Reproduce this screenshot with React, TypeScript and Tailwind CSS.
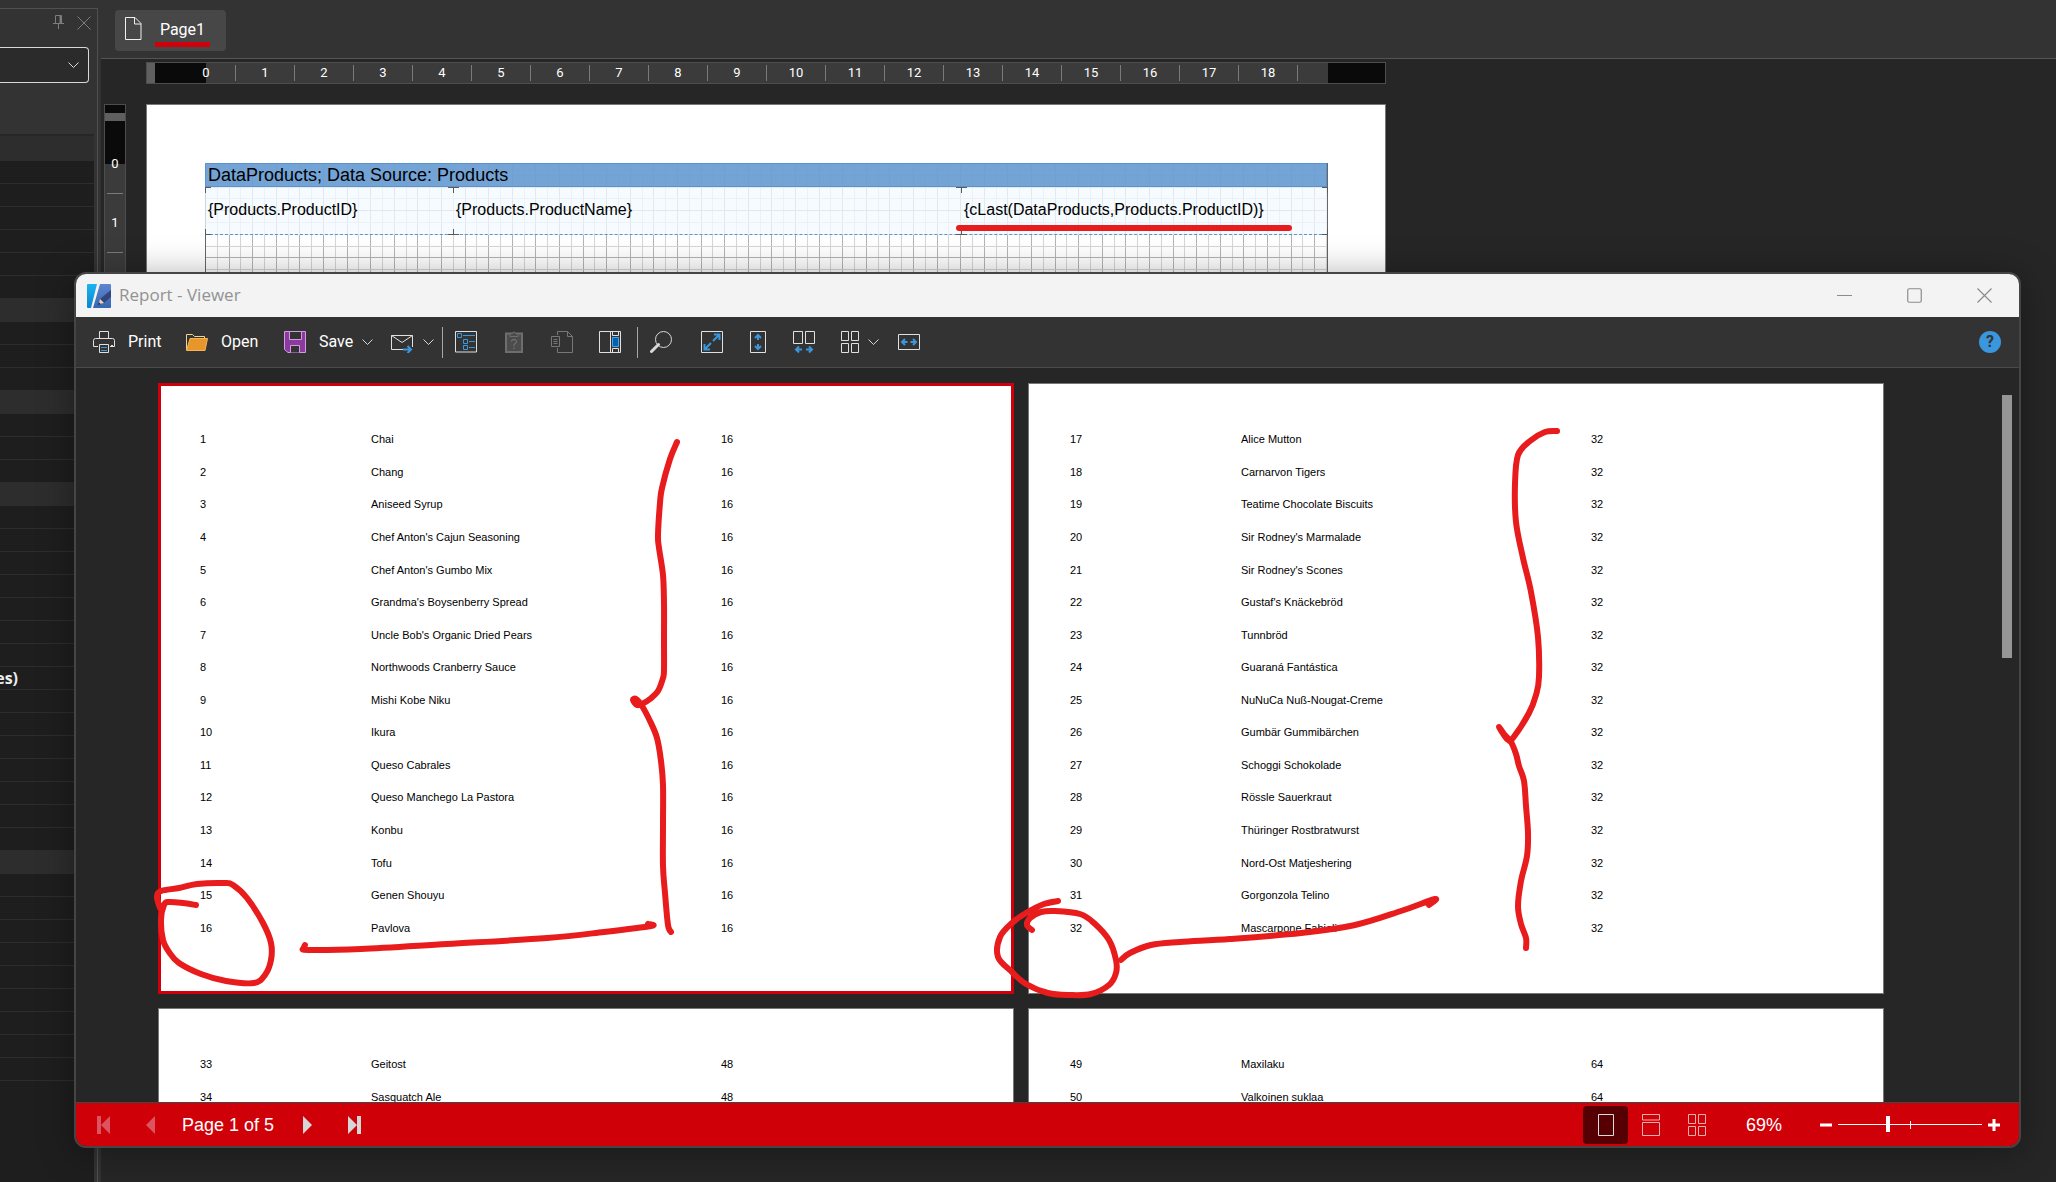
import type { ReactNode } from "react";

type Product = [id: number, name: string, last: number];

const toRows = (first: number, last: number, names: string[]): Product[] =>
  names.map((name, i) => [first + i, name, last]);

const PAGES: Product[][] = [
  toRows(1, 16, [
    "Chai",
    "Chang",
    "Aniseed Syrup",
    "Chef Anton's Cajun Seasoning",
    "Chef Anton's Gumbo Mix",
    "Grandma's Boysenberry Spread",
    "Uncle Bob's Organic Dried Pears",
    "Northwoods Cranberry Sauce",
    "Mishi Kobe Niku",
    "Ikura",
    "Queso Cabrales",
    "Queso Manchego La Pastora",
    "Konbu",
    "Tofu",
    "Genen Shouyu",
    "Pavlova",
  ]),
  toRows(17, 32, [
    "Alice Mutton",
    "Carnarvon Tigers",
    "Teatime Chocolate Biscuits",
    "Sir Rodney's Marmalade",
    "Sir Rodney's Scones",
    "Gustaf's Knäckebröd",
    "Tunnbröd",
    "Guaraná Fantástica",
    "NuNuCa Nuß-Nougat-Creme",
    "Gumbär Gummibärchen",
    "Schoggi Schokolade",
    "Rössle Sauerkraut",
    "Thüringer Rostbratwurst",
    "Nord-Ost Matjeshering",
    "Gorgonzola Telino",
    "Mascarpone Fabioli",
  ]),
  toRows(33, 48, ["Geitost", "Sasquatch Ale"]),
  toRows(49, 64, ["Maxilaku", "Valkoinen suklaa"]),
];

// Row counts of the property grid sections, each one opened by a lighter header
const PROPERTY_SECTIONS = [6, 3, 3, 15, 9];

const RULER = Array.from({ length: 19 }, (_, i) => i);

export default function App() {
  return (
    <div className="relative flex h-screen overflow-hidden bg-[#262626] font-['Roboto',sans-serif] text-white">
      <PropertiesPanel />
      <Designer />
      <Viewer />
      <Ink />
    </div>
  );
}

/* ---------- designer behind the viewer ---------- */

function PropertiesPanel() {
  return (
    <aside className="flex w-[101px] shrink-0 flex-col bg-[#333] pt-2 pr-[3px]">
      <div className="flex min-h-0 flex-1 flex-col border-t border-r border-[#505050] pr-[3px]">
        <div className="flex h-[38px] items-start justify-end gap-3 pt-1.5 pr-[3px]">
          <button aria-label="Pin">
            <svg width="12" height="15" viewBox="0 0 12 15" fill="none" stroke="#7d7d7d">
              <path d="M2.5 8.5V.5h6v8M0 8.5h11M5.5 9v5" />
              <path d="M7.500 1v7" strokeWidth="2" />
            </svg>
          </button>
          <button aria-label="Close panel">
            <svg width="14" height="15" viewBox="0 0 14 15" stroke="#7d7d7d">
              <path d="M.5 1.5l13 13M13.5 1.5l-13 13" />
            </svg>
          </button>
        </div>
        <div className="relative mr-[5px] h-9">
          <select
            aria-label="Component"
            className="h-9 w-full appearance-none rounded-r border border-l-0 border-[#d8d8d8] bg-[#2b2b2b]"
          />
          <Chevron className="pointer-events-none absolute top-[15px] right-2.5" />
        </div>
        <div className="mt-[51px] min-h-0 flex-1 overflow-hidden border-t-2 border-[#262626] bg-[#1e1e1e]">
          {PROPERTY_SECTIONS.map((count, s) => (
            <div key={s}>
              <div className={s === 0 ? "h-[25px] bg-[#2d2d2d]" : "h-[23px] bg-[#2d2d2d]"} />
              {Array.from({ length: count }, (_, r) => (
                <div key={r} className="flex h-[23px] items-center border-b border-[#2d2d2d]">
                  {s === 3 && r === 7 && (
                    <span className="flex w-[18px] justify-end overflow-hidden font-['Open_Sans',sans-serif] text-base leading-[22px] font-bold text-[#ececec]">
                      es)
                    </span>
                  )}
                </div>
              ))}
            </div>
          ))}
        </div>
      </div>
    </aside>
  );
}

function Designer() {
  return (
    <main className="flex min-w-0 flex-1 flex-col">
      <div className="h-[59px] shrink-0 border-b border-[#555] bg-[#333] px-3.5 pt-2.5">
        <button className="flex h-[41px] w-[111px] items-center rounded bg-[#474747] pl-2.5">
          <svg width="17" height="23" viewBox="0 0 17 23" fill="none" stroke="#f0f0f0" className="mb-1">
            <path d="M.5.5h9.500l6 6v16H.5zM9.500.5v6.500h6.500" />
          </svg>
          <span className="ml-[13px] flex flex-col items-center pt-1">
            <span className="px-1 text-base leading-6">Page1</span>
            <span className="h-[5px] w-[55px] bg-[#d0000a]" />
          </span>
        </button>
      </div>

      <div className="min-h-0 flex-1 overflow-hidden pt-[3px] pl-[3px]">
        <div className="ml-[42px] flex h-[22px] w-[1240px] border border-[#4d4d4d] bg-[#3b3b3b] text-[13px]">
          <span className="w-2 bg-[#5f5f5f]" />
          <span className="w-[22px] bg-[#0a0a0a]" />
          {RULER.map((n) => (
            <span
              key={n}
              className={
                n === 0
                  ? "flex w-[59px] items-center bg-linear-to-r from-[#0a0a0a] from-50% to-transparent to-50%"
                  : "flex w-[59px] items-center"
              }
            >
              <span className="flex-1 text-center">{n}</span>
              <span className="h-4 w-px bg-[#7a7a7a]" />
            </span>
          ))}
          <span className="w-[30px]" />
          <span className="flex-1 bg-[#0a0a0a]" />
        </div>

        <div className="mt-5 flex h-[600px] items-stretch">
          <div className="flex w-[22px] flex-col border border-[#4d4d4d] bg-[#3b3b3b] text-[13px]">
            <span className="h-2 bg-[#0a0a0a]" />
            <span className="h-2 bg-[#5f5f5f]" />
            <span className="h-3.5 bg-[#0a0a0a]" />
            {[0, 1, 2].map((n) => (
              <span
                key={n}
                className={
                  n === 0
                    ? "flex h-[59px] flex-col items-center bg-linear-to-b from-[#0a0a0a] from-50% to-transparent to-50%"
                    : "flex h-[59px] flex-col items-center"
                }
              >
                <span className="flex flex-1 items-center">{n}</span>
                <span className="h-px w-4 bg-[#7a7a7a]" />
              </span>
            ))}
          </div>
          <TemplatePage />
        </div>
      </div>
    </main>
  );
}

function TemplatePage() {
  return (
    <div className="ml-5 w-[1240px] border border-b-0 border-[#777] bg-white px-[58px] pt-[58px] text-black">
      <div className="relative h-[200px] font-['Liberation_Sans',sans-serif]">
        <GridPaper />
        <div className="relative">
          <div className="flex h-6 items-center border border-[#5b92cf] bg-[#6d9fd4]/95 px-0.5 text-lg leading-6">
            DataProducts; Data Source: Products
          </div>
          <div className="flex h-12 items-center border-b border-dashed border-[#5b92cf] bg-[#f3f9ff]/75 pb-0.5 text-base">
            <span className="w-[248px] pl-[3px]">{"{Products.ProductID}"}</span>
            <span className="w-[508px] pl-[3px]">{"{Products.ProductName}"}</span>
            <span className="flex-1 pl-[3px]">{"{cLast(DataProducts,Products.ProductID)}"}</span>
          </div>
        </div>
        <CellMarks />
      </div>
    </div>
  );
}

function GridPaper() {
  const at = (i: number) => Math.round((i * 59) / 5);
  return (
    <svg className="absolute inset-0" width="1123" height="200" shapeRendering="crispEdges">
      {Array.from({ length: 96 }, (_, i) => (
        <rect key={`v${i}`} x={at(i)} y="0" width="1" height="200" fill={i % 2 ? "#d6d6d6" : "#b4b4b4"} />
      ))}
      {Array.from({ length: 17 }, (_, i) => (
        <rect key={`h${i}`} x="0" y={at(i)} width="1123" height="1" fill={i % 2 ? "#d6d6d6" : "#b4b4b4"} />
      ))}
      <path d="M.5 0V200M1122.5 0V200" stroke="#666" />
    </svg>
  );
}

function CellMarks() {
  return (
    <svg className="absolute inset-0" width="1123" height="80" fill="none" stroke="#5a5a5a">
      {[0, 248, 756, 1122].map((x) => (
        <path key={x} d={`M${x - 5} 24.5h11M${x + 0.5} 24v6M${x - 5} 71.500h11M${x + 0.5} 66v6`} />
      ))}
    </svg>
  );
}

/* ---------- report viewer window ---------- */

function Viewer() {
  return (
    <section
      aria-label="Report - Viewer"
      className="absolute top-[272px] right-[35px] bottom-[34px] left-[74px] flex flex-col overflow-hidden rounded-xl border-2 border-[#454545] bg-[#262626] shadow-[0_4px_36px_rgba(0,0,0,0.35)]"
    >
      <header className="flex h-[43px] shrink-0 items-center bg-[#f3f3f3] pl-[11px]">
        <AppLogo />
        <h1 className="ml-2 flex-1 pb-0.5 font-['Open_Sans',sans-serif] text-[17px] leading-6 text-[#929292]">
          Report - Viewer
        </h1>
        <CaptionButton label="Minimize">
          <path d="M0 7.500h15" />
        </CaptionButton>
        <CaptionButton label="Maximize">
          <rect x=".75" y=".75" width="13.500" height="13.500" rx="1.500" />
        </CaptionButton>
        <CaptionButton label="Close">
          <path d="M.5.5l14 14M14.500.5l-14 14" />
        </CaptionButton>
      </header>

      <Toolbar />

      <div className="flex min-h-0 flex-1 overflow-hidden pr-[7px]">
        <div className="grid flex-1 grid-cols-2 content-start gap-3.5 pt-[15px] pr-[118px] pl-[82px]">
          {PAGES.map((rows, i) => (
            <ReportPage key={i} rows={rows} selected={i === 0} />
          ))}
        </div>
        <div className="mt-[27px] h-[263px] w-2.5 bg-[#959595]" />
      </div>

      <StatusBar />
    </section>
  );
}

function CaptionButton({ label, children }: { label: string; children: ReactNode }) {
  return (
    <button aria-label={label} className="flex h-full w-[70px] items-center justify-center">
      <svg width="15" height="15" viewBox="0 0 15 15" fill="none" stroke="#8c8c8c" strokeWidth="1.200">
        {children}
      </svg>
    </button>
  );
}

function ReportPage({ rows, selected }: { rows: Product[]; selected: boolean }) {
  return (
    <article
      className={
        selected
          ? "h-[611px] bg-white px-[42px] pt-10 ring-[3px] ring-[#d0000a] ring-inset"
          : "h-[611px] bg-white px-[42px] pt-10 ring-1 ring-[#777] ring-inset"
      }
    >
      <table
        className={
          rows.length > 2
            ? "h-[521px] w-full table-fixed font-['Liberation_Sans',sans-serif] text-[11px] leading-4 text-black"
            : "h-[65px] w-full table-fixed font-['Liberation_Sans',sans-serif] text-[11px] leading-4 text-black"
        }
      >
        <colgroup>
          <col className="w-[171px]" />
          <col className="w-[350px]" />
          <col />
        </colgroup>
        <tbody>
          {rows.map(([id, name, last]) => (
            <tr key={id}>
              <td className="p-0">{id}</td>
              <td className="p-0">{name}</td>
              <td className="p-0">{last}</td>
            </tr>
          ))}
        </tbody>
      </table>
    </article>
  );
}

function Toolbar() {
  return (
    <div className="flex h-[51px] shrink-0 items-center border-b border-[#4b4b4b] bg-[#333] pr-[18px] pl-[17px] text-base">
      <button className="flex w-[93px] items-center gap-[13px]">
        <Icon>
          <path d="M6.500 7V.5h9V7M5 15.500H.5v-6q0-2 2-2h17q2 0 2 2v6H17M6.500 13.500h9v8h-9z" />
          <path d="M8 16.500h6M8 19.500h6" stroke="#3a96dd" />
          <path d="M18 14.500h2" />
        </Icon>
        Print
      </button>
      <button className="flex w-[98px] items-center gap-[13px]">
        <Icon>
          <path d="M.5 19V3.500h6l2 2h10V8" stroke="#f5d48a" />
          <path d="M4 7.500H21.500L19 19.500H.5z" fill="#e8962a" stroke="#f0b659" />
        </Icon>
        Open
      </button>
      <button className="flex w-[107px] items-center gap-[13px]">
        <Icon>
          <path d="M.5.5h21v21H4l-3.500-3z" fill="#8d3aa0" stroke="#d39be0" />
          <path d="M5.500.5h12v8h-12zM6.500 21.500v-7h9v7" fill="#333" stroke="#d39be0" />
        </Icon>
        Save
        <Chevron className="-ml-1" />
      </button>
      <button aria-label="Send" className="flex w-[51px] items-center gap-2.5">
        <Icon>
          <path d="M12 18.500H.5v-14h21V16M.5 4.500l10.500 7 10.500-7" />
          <path d="M12 18.500h7M16.500 15l3.500 3.500-3.500 3.500" stroke="#3a96dd" strokeWidth="2" />
        </Icon>
        <Chevron />
      </button>

      <span className="h-[31px] w-px bg-[#a8a8a8]" />

      <button aria-label="Bookmarks" className="ml-3 w-12">
        <Icon>
          <path d="M.5.5h21v20.500H.5z" />
          <path
            d="M2.500 2.500h4v4h-4zM8 4.500h12M8.500 8.500h4v4h-4zM14 10.500h6M8.500 14.500h4v4h-4zM14 16.500h6"
            stroke="#3a96dd"
          />
        </Icon>
      </button>
      <button aria-label="Parameters" disabled className="w-12">
        <Icon>
          <path d="M3 2.500h16v18.500H3z" fill="#4c4c4c" stroke="#6e6e6e" strokeWidth="2" />
          <path d="M7 5.500V2.500h2.500q1.500-3.500 3 0H15v3z" fill="#4c4c4c" stroke="#6e6e6e" />
          <path d="M8.500 10.500q0-2 2.500-2t2.500 2q0 1.500-2.500 3v1.500M11 16.500v1.500" stroke="#7c7c7c" />
        </Icon>
      </button>
      <button aria-label="Resources" disabled className="w-12">
        <Icon stroke="#777">
          <path d="M6.500 4V.5h10l5 5v16h-15V17M16.500.5v5h5M.5 5.500h8v10h-8zM2.500 8.500h4M2.500 10.500h4M2.500 12.500h4" />
        </Icon>
      </button>
      <button aria-label="Thumbnails" className="w-[38px]">
        <Icon>
          <path d="M.5.5h21v21H.5zM11.500.5v21M13.500.5v4h6v-4M13.500 21.500v-4h6v4" />
          <path d="M13.500 6.500h6v9h-6z" fill="#0063b1" stroke="#4aa3e8" />
        </Icon>
      </button>

      <span className="h-[31px] w-px bg-[#a8a8a8]" />

      <button aria-label="Find" className="ml-3 w-[51px]">
        <Icon stroke="#d8d8d8">
          <circle cx="13.500" cy="8.500" r="8" />
          <path d="M8.500 13.500L1.500 20.500" strokeWidth="3" strokeLinecap="round" />
        </Icon>
      </button>
      <button aria-label="Full screen" className="w-[46px]">
        <Icon>
          <path d="M.5.5h21v21H.5z" />
          <path d="M12 10l6-6M13 3.500h5.500V9M10 12l-6 6M3.500 13v5.500H9" stroke="#3a96dd" strokeWidth="2" />
        </Icon>
      </button>
      <button aria-label="One page" className="w-[46px]">
        <Icon>
          <path d="M3.500.5h15v21h-15z" />
          <path d="M11 4v5M8 7l3-3 3 3M11 18v-5M8 15l3 3 3-3" stroke="#3a96dd" strokeWidth="2" />
        </Icon>
      </button>
      <button aria-label="Two pages" className="w-[46px]">
        <Icon>
          <path d="M.5.5h9v12h-9zM12.500.5h9v12h-9z" />
          <path d="M9 18.500H3M6 15.500l-3 3 3 3M13 18.500h6M16 15.500l3 3-3 3" stroke="#3a96dd" strokeWidth="2" />
        </Icon>
      </button>
      <button aria-label="Multiple pages" className="flex w-[59px] items-center gap-[7px]">
        <Icon>
          <path d="M2.500.5h7v9h-7zM12.500.5h7v9h-7zM2.500 12.500h7v9h-7zM12.500 12.500h7v9h-7z" />
        </Icon>
        <Chevron />
      </button>
      <button aria-label="Page width">
        <Icon>
          <path d="M.5 3.500h21v15H.5z" />
          <path d="M9.500 11H4M7 8l-3 3 3 3M12.500 11H18M15 8l3 3-3 3" stroke="#3a96dd" strokeWidth="2" />
        </Icon>
      </button>

      <button
        aria-label="Help"
        className="ml-auto flex size-[22px] items-center justify-center rounded-full bg-[#3a96dd] text-base leading-none font-bold text-[#333]"
      >
        ?
      </button>
    </div>
  );
}

function StatusBar() {
  return (
    <footer className="flex h-[44px] shrink-0 items-center border-t border-[#454545] bg-[#d00009] pr-[19px] pl-[21px] font-['Liberation_Sans',sans-serif] text-lg">
      <button aria-label="First page" disabled className="w-[49px]">
        <svg width="13" height="18" fill="#da5560">
          <path d="M0 0h4v18H0zM13 0v18L4 9z" />
        </svg>
      </button>
      <button aria-label="Previous page" disabled className="w-9">
        <svg width="9" height="18" fill="#da5560">
          <path d="M9 0v18L0 9z" />
        </svg>
      </button>
      <span className="w-[121px]">Page 1 of 5</span>
      <button aria-label="Next page" className="w-[45px]">
        <svg width="9" height="18" fill="#d6d6d6">
          <path d="M0 0v18l9-9z" />
        </svg>
      </button>
      <button aria-label="Last page">
        <svg width="13" height="18" fill="#d6d6d6">
          <path d="M9 0h4v18H9zM0 0v18l9-9z" />
        </svg>
      </button>

      <div className="ml-auto flex items-center">
        <button
          aria-label="Single page"
          className="flex h-[38px] w-[45px] items-center justify-center rounded bg-[#560003]"
        >
          <Icon stroke="#dcdcdc">
            <path d="M3.500.5h15v21h-15z" />
          </Icon>
        </button>
        <button aria-label="Continuous" className="ml-3">
          <Icon stroke="#ecb0b0">
            <path d="M2.500.5h17v5.500h-17zM2.500 8.500h17v13h-17z" />
          </Icon>
        </button>
        <button aria-label="Multiple page view" className="ml-6">
          <Icon stroke="#ecb0b0">
            <path d="M2.500.5h7v9h-7zM12.500.5h7v9h-7zM2.500 12.500h7v9h-7zM12.500 12.500h7v9h-7z" />
          </Icon>
        </button>
        <span className="ml-[38px] w-[74px]">69%</span>
        <button aria-label="Zoom out">
          <svg width="12" height="12" fill="#fff">
            <path d="M0 4.500h12v3H0z" />
          </svg>
        </button>
        <div className="relative mx-1.5 flex h-4 items-center">
          <span className="absolute left-[72px] h-2 w-px bg-white" />
          <input
            type="range"
            aria-label="Zoom"
            min={0}
            max={200}
            defaultValue={69}
            className="relative h-4 w-[144px] appearance-none bg-transparent [&::-webkit-slider-runnable-track]:h-px [&::-webkit-slider-runnable-track]:bg-white [&::-webkit-slider-thumb]:-mt-2 [&::-webkit-slider-thumb]:h-4 [&::-webkit-slider-thumb]:w-1 [&::-webkit-slider-thumb]:appearance-none [&::-webkit-slider-thumb]:bg-white"
          />
        </div>
        <button aria-label="Zoom in">
          <svg width="12" height="12" fill="#fff">
            <path d="M0 4.500h4.500V0h3v4.500H12v3H7.500V12h-3V7.500H0z" />
          </svg>
        </button>
      </div>
    </footer>
  );
}

function Icon({ stroke = "#e0e0e0", children }: { stroke?: string; children: ReactNode }) {
  return (
    <svg width="22" height="22" viewBox="0 0 22 22" fill="none" stroke={stroke} className="block shrink-0">
      {children}
    </svg>
  );
}

function Chevron({ className }: { className?: string }) {
  return (
    <svg width="11" height="7" viewBox="0 0 11 7" fill="none" stroke="#d8d8d8" className={className}>
      <path d="M.5.5l5 5 5-5" />
    </svg>
  );
}

function AppLogo() {
  return (
    <svg width="24" height="24" viewBox="0 0 24 24">
      <defs>
        <linearGradient id="logo-cyan" x1="0" y1="0" x2="0" y2="1">
          <stop offset="0" stopColor="#1cb4f0" />
          <stop offset="1" stopColor="#0b84cc" />
        </linearGradient>
        <linearGradient id="logo-blue" x1="0" y1="0" x2="0" y2="1">
          <stop offset="0" stopColor="#5f86d0" />
          <stop offset="1" stopColor="#3766b0" />
        </linearGradient>
      </defs>
      <path d="M1 0h9L4 24H1q-1 0-1-1V1q0-1 1-1z" fill="url(#logo-cyan)" />
      <path d="M13 0h10q1 0 1 1v22q0 1-1 1H6z" fill="url(#logo-blue)" />
      <path d="M24 6v7l-7 6-4-4z" fill="#33457a" />
      <path d="M13 15l4 4-5 1z" fill="#ecd3ae" />
      <path d="M12 18.500l1.500 1.500-2.500 1z" fill="#222" />
    </svg>
  );
}

/* ---------- red pen marks ---------- */

type Point = [x: number, y: number];

const STROKES: Point[][] = [
  [[959, 228], [1289, 228]],
  [
    [677, 442], [670, 459], [662, 488], [660, 503], [658, 535], [659, 548], [663, 575], [664, 603], [664, 640],
    [664, 670], [663, 678], [658, 691], [650, 699], [642, 704], [637, 705], [633, 700], [636, 699], [642, 706],
    [650, 721], [657, 738], [661, 761], [663, 785], [663, 825], [663, 866], [665, 893], [668, 925], [671, 932],
  ],
  [
    [1557, 431], [1545, 432], [1530, 441], [1518, 455], [1515, 484], [1516, 522], [1523, 558], [1531, 592],
    [1538, 637], [1539, 677], [1536, 695], [1529, 713], [1513, 738], [1508, 740], [1504, 735], [1499, 727],
    [1504, 734], [1511, 742], [1516, 754], [1519, 766], [1524, 781], [1526, 806], [1528, 833], [1527, 856],
    [1521, 881], [1518, 906], [1521, 924], [1526, 938], [1526, 948],
  ],
  [
    [196, 905], [183, 903], [169, 902], [164, 905], [161, 920], [163, 940], [169, 952], [179, 963], [201, 974],
    [226, 981], [254, 983], [265, 975], [271, 960], [271, 943], [263, 923], [247, 898], [233, 885], [224, 883],
    [197, 884], [179, 888], [161, 891], [157, 897], [160, 908],
  ],
  [[305, 945], [304, 948], [308, 950], [361, 949], [447, 944], [547, 938], [604, 932], [651, 926], [648, 924]],
  [
    [1058, 901], [1044, 904], [1026, 913], [1012, 923], [1000, 937], [998, 957], [1012, 972], [1026, 984],
    [1048, 993], [1069, 995], [1091, 994], [1109, 985], [1116, 973], [1116, 960], [1109, 940], [1094, 923],
    [1080, 914], [1055, 911], [1041, 912], [1030, 918], [1027, 925], [1032, 930],
  ],
  [
    [1121, 960], [1130, 953], [1151, 945], [1180, 942], [1230, 939], [1301, 933], [1355, 925], [1401, 911],
    [1435, 899], [1429, 905],
  ],
];

// Catmull-Rom spline through the pen points
function smooth(p: Point[]) {
  let d = `M${p[0][0]} ${p[0][1]}`;
  for (let i = 0; i < p.length - 1; i++) {
    const a = p[i - 1] ?? p[i];
    const b = p[i];
    const c = p[i + 1];
    const e = p[i + 2] ?? c;
    d += `C${b[0] + (c[0] - a[0]) / 6} ${b[1] + (c[1] - a[1]) / 6} ${c[0] - (e[0] - b[0]) / 6} ${c[1] - (e[1] - b[1]) / 6} ${c[0]} ${c[1]}`;
  }
  return d;
}

function Ink() {
  return (
    <svg
      width="2056"
      height="1182"
      fill="none"
      stroke="#e81c1c"
      strokeWidth="6"
      strokeLinecap="round"
      strokeLinejoin="round"
      className="pointer-events-none absolute top-0 left-0"
    >
      {STROKES.map((points, i) => (
        <path key={i} d={smooth(points)} />
      ))}
    </svg>
  );
}
